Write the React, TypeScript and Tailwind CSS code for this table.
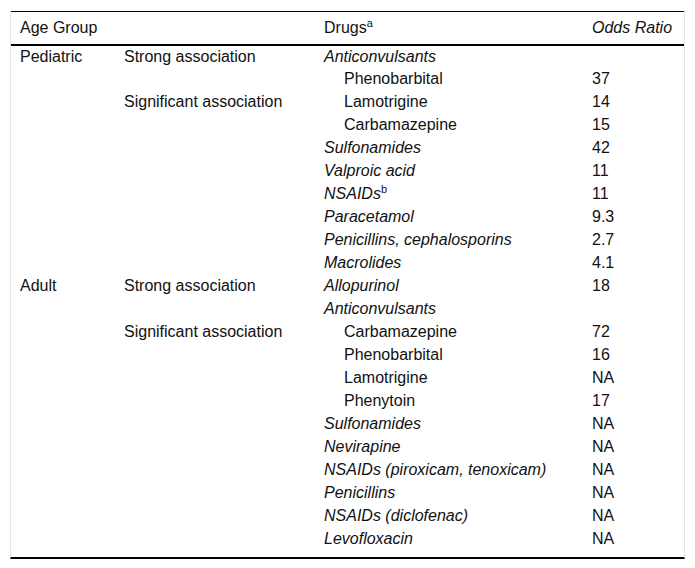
import React from 'react';

type Row = {
  age?: string;
  assoc?: string;
  drug: React.ReactNode;
  italic?: boolean;
  indent?: boolean;
  odds?: string;
};

const rows: Row[] = [
  { age: 'Pediatric', assoc: 'Strong association', drug: 'Anticonvulsants', italic: true },
  { drug: 'Phenobarbital', indent: true, odds: '37' },
  { assoc: 'Significant association', drug: 'Lamotrigine', indent: true, odds: '14' },
  { drug: 'Carbamazepine', indent: true, odds: '15' },
  { drug: 'Sulfonamides', italic: true, odds: '42' },
  { drug: 'Valproic acid', italic: true, odds: '11' },
  {
    drug: (
      <>
        NSAIDs<sup className="not-italic text-[11px] -top-[6px]">b</sup>
      </>
    ),
    italic: true,
    odds: '11',
  },
  { drug: 'Paracetamol', italic: true, odds: '9.3' },
  { drug: 'Penicillins, cephalosporins', italic: true, odds: '2.7' },
  { drug: 'Macrolides', italic: true, odds: '4.1' },
  { age: 'Adult', assoc: 'Strong association', drug: 'Allopurinol', italic: true, odds: '18' },
  { drug: 'Anticonvulsants', italic: true },
  { assoc: 'Significant association', drug: 'Carbamazepine', indent: true, odds: '72' },
  { drug: 'Phenobarbital', indent: true, odds: '16' },
  { drug: 'Lamotrigine', indent: true, odds: 'NA' },
  { drug: 'Phenytoin', indent: true, odds: '17' },
  { drug: 'Sulfonamides', italic: true, odds: 'NA' },
  { drug: 'Nevirapine', italic: true, odds: 'NA' },
  { drug: 'NSAIDs (piroxicam, tenoxicam)', italic: true, odds: 'NA' },
  { drug: 'Penicillins', italic: true, odds: 'NA' },
  { drug: 'NSAIDs (diclofenac)', italic: true, odds: 'NA' },
  { drug: 'Levofloxacin', italic: true, odds: 'NA' },
];

const App = () => {
  return (
    <div className="bg-white w-[695px] h-[568px] pt-[11px] px-[10px] font-['Liberation_Sans',Arial,sans-serif] text-[16px] text-[#111]">
      <div className="border-x border-[#e6e6e6] border-b-2 border-b-black">
        <table className="w-full border-collapse">
          <thead>
            <tr className="border-t border-black border-b-2 border-b-black">
              <th className="w-[104px] h-[33px] pl-[9px] text-left font-normal leading-[18px]">Age Group</th>
              <th className="w-[200px] pl-[9px] text-left font-normal leading-[18px]"></th>
              <th className="w-[268px] pl-[9px] text-left font-normal leading-[18px]">
                Drugs<sup className="text-[11px] -top-[6px]">a</sup>
              </th>
              <th className="pl-[9px] text-left font-normal italic leading-[18px]">Odds Ratio</th>
            </tr>
          </thead>
          <tbody>
            {rows.map((r, i) => (
              <tr key={i} className="h-[23px] align-middle">
                <td className="pl-[9px] leading-[18px]">{r.age}</td>
                <td className="pl-[9px] leading-[18px]">{r.assoc}</td>
                <td
                  className={`leading-[18px] ${r.indent ? 'pl-[29px]' : 'pl-[9px]'} ${
                    r.italic ? 'italic' : ''
                  }`}
                >
                  {r.drug}
                </td>
                <td className="pl-[9px] leading-[18px]">{r.odds}</td>
              </tr>
            ))}
          </tbody>
        </table>
        <div className="h-[6px]"></div>
      </div>
    </div>
  );
};

export default App;
